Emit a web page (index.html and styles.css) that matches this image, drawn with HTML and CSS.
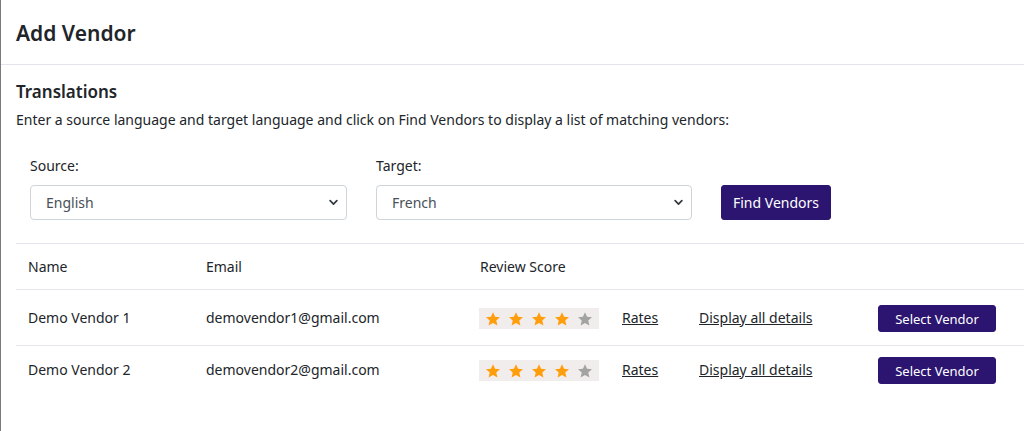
FILE: index.html
```html
<!DOCTYPE html>
<html lang="en">
<head>
<meta charset="utf-8">
<title>Add Vendor</title>
<link rel="stylesheet" href="styles.css">
</head>
<body>
<div class="modal">
  <header class="modal-header">
    <h1 class="modal-title">Add Vendor</h1>
  </header>
  <section class="modal-body">
    <h2 class="section-title">Translations</h2>
    <p class="hint">Enter a source language and target language and click on Find Vendors to display a list of matching vendors:</p>
    <div class="form-row">
      <div class="field field-source">
        <label class="field-label">Source:</label>
        <div class="select"><span>English</span><svg class="chev" viewBox="0 0 10 7" width="9" height="7"><path d="M1.3 1.5 L5 5.2 L8.7 1.5" fill="none" stroke="#343a40" stroke-width="1.9" stroke-linecap="round" stroke-linejoin="round"/></svg></div>
      </div>
      <div class="field field-target">
        <label class="field-label">Target:</label>
        <div class="select"><span>French</span><svg class="chev" viewBox="0 0 10 7" width="9" height="7"><path d="M1.3 1.5 L5 5.2 L8.7 1.5" fill="none" stroke="#343a40" stroke-width="1.9" stroke-linecap="round" stroke-linejoin="round"/></svg></div>
      </div>
      <button class="btn btn-find">Find Vendors</button>
    </div>
    <div class="table">
      <div class="tr th">
        <div class="cell">Name</div>
        <div class="cell">Email</div>
        <div class="cell span">Review Score</div>
      </div>
      <div class="tr">
        <div class="cell">Demo Vendor 1</div>
        <div class="cell">demovendor1@gmail.com</div>
        <div class="cell"><div class="stars">
          <svg class="star on" viewBox="0 0 24 24"><path d="M12 1.8l3.1 6.9 7.4.7-5.6 5 1.7 7.4L12 17.9l-6.6 3.9 1.7-7.4-5.6-5 7.4-.7z"/></svg>
          <svg class="star on" viewBox="0 0 24 24"><path d="M12 1.8l3.1 6.9 7.4.7-5.6 5 1.7 7.4L12 17.9l-6.6 3.9 1.7-7.4-5.6-5 7.4-.7z"/></svg>
          <svg class="star on" viewBox="0 0 24 24"><path d="M12 1.8l3.1 6.9 7.4.7-5.6 5 1.7 7.4L12 17.9l-6.6 3.9 1.7-7.4-5.6-5 7.4-.7z"/></svg>
          <svg class="star on" viewBox="0 0 24 24"><path d="M12 1.8l3.1 6.9 7.4.7-5.6 5 1.7 7.4L12 17.9l-6.6 3.9 1.7-7.4-5.6-5 7.4-.7z"/></svg>
          <svg class="star" viewBox="0 0 24 24"><path d="M12 1.8l3.1 6.9 7.4.7-5.6 5 1.7 7.4L12 17.9l-6.6 3.9 1.7-7.4-5.6-5 7.4-.7z"/></svg>
        </div></div>
        <div class="cell"><a class="link" href="#">Rates</a></div>
        <div class="cell"><a class="link" href="#">Display all details</a></div>
        <div class="cell"><button class="btn btn-select">Select Vendor</button></div>
      </div>
      <div class="tr last">
        <div class="cell">Demo Vendor 2</div>
        <div class="cell">demovendor2@gmail.com</div>
        <div class="cell"><div class="stars">
          <svg class="star on" viewBox="0 0 24 24"><path d="M12 1.8l3.1 6.9 7.4.7-5.6 5 1.7 7.4L12 17.9l-6.6 3.9 1.7-7.4-5.6-5 7.4-.7z"/></svg>
          <svg class="star on" viewBox="0 0 24 24"><path d="M12 1.8l3.1 6.9 7.4.7-5.6 5 1.7 7.4L12 17.9l-6.6 3.9 1.7-7.4-5.6-5 7.4-.7z"/></svg>
          <svg class="star on" viewBox="0 0 24 24"><path d="M12 1.8l3.1 6.9 7.4.7-5.6 5 1.7 7.4L12 17.9l-6.6 3.9 1.7-7.4-5.6-5 7.4-.7z"/></svg>
          <svg class="star on" viewBox="0 0 24 24"><path d="M12 1.8l3.1 6.9 7.4.7-5.6 5 1.7 7.4L12 17.9l-6.6 3.9 1.7-7.4-5.6-5 7.4-.7z"/></svg>
          <svg class="star" viewBox="0 0 24 24"><path d="M12 1.8l3.1 6.9 7.4.7-5.6 5 1.7 7.4L12 17.9l-6.6 3.9 1.7-7.4-5.6-5 7.4-.7z"/></svg>
        </div></div>
        <div class="cell"><a class="link" href="#">Rates</a></div>
        <div class="cell"><a class="link" href="#">Display all details</a></div>
        <div class="cell"><button class="btn btn-select">Select Vendor</button></div>
      </div>
    </div>
  </section>
</div>
</body>
</html>
```
FILE: styles.css
```css
* { box-sizing: border-box; }
html, body { margin: 0; padding: 0; background: #fff; }
body {
  font-family: "Noto Sans", "Open Sans", "Liberation Sans", sans-serif;
  color: #212529;
  font-size: 14px;
  height: 431px;
  overflow: hidden;
}
.modal {
  height: 431px;
  border-left: 1px solid #7a7a7a;
}
.modal-header {
  height: 65px;
  border-bottom: 1px solid #e3e5ea;
  padding: 0 15px;
  display: flex;
  align-items: center;
}
.modal-title {
  margin: 0;
  font-size: 21px;
  font-weight: 600;
  line-height: 1;
  padding-top: 2px;
  color: #212529;
}
.modal-body { padding: 16px 0 0 15px; }
.section-title {
  margin: 0;
  font-size: 17px;
  font-weight: 600;
  line-height: 22px;
}
.hint {
  margin: 7px 0 0;
  font-size: 14px;
  line-height: 20px;
}
.form-row {
  display: flex;
  align-items: flex-end;
  padding: 19px 0 23px 14px;
  height: 113px;
}
.field { display: flex; flex-direction: column; }
.field-source { width: 317px; }
.field-target { width: 316px; margin-left: 29px; }
.field-label {
  font-size: 14px;
  line-height: 20px;
  margin-bottom: 9px;
  color: #212529;
}
.select {
  height: 35px;
  border: 1px solid #ced4da;
  border-radius: 4px;
  display: flex;
  align-items: center;
  justify-content: space-between;
  padding: 0 8px 0 15px;
  color: #495057;
  font-size: 14px;
}
.btn {
  font-family: inherit;
  border: 1px solid #2b1570;
  background: #2b1570;
  color: #fff;
  border-radius: 3px;
  cursor: pointer;
}
.btn-find {
  margin-left: 29px;
  width: 110px;
  height: 35px;
  font-size: 14px;
  padding: 0;
}
.tr {
  display: grid;
  grid-template-columns: 178px 274px 142px 77px 179px 1fr;
  align-items: center;
  border-top: 1px solid #e3e5ea;
  height: 56px;
}
.tr.th { height: 46px; }
.tr.last { height: 48px; }
.cell { padding-left: 12px; font-size: 14px; line-height: 20px; }
.span { grid-column: 3 / span 4; }
.stars {
  width: 120px;
  height: 21px;
  background: #f2eded;
  display: flex;
  align-items: center;
  padding-left: 6px;
  gap: 7px;
  margin-left: -1px;
  margin-top: 2px;
}
.star {
  width: 16px;
  height: 16px;
  fill: #a3a3a3;
}
.star.on { fill: #ff9e0d; }
.link { color: #212529; text-decoration: underline; }
.btn-select {
  width: 118px;
  height: 27px;
  font-size: 13px;
  padding: 0;
  margin-top: 2px;
}
```
